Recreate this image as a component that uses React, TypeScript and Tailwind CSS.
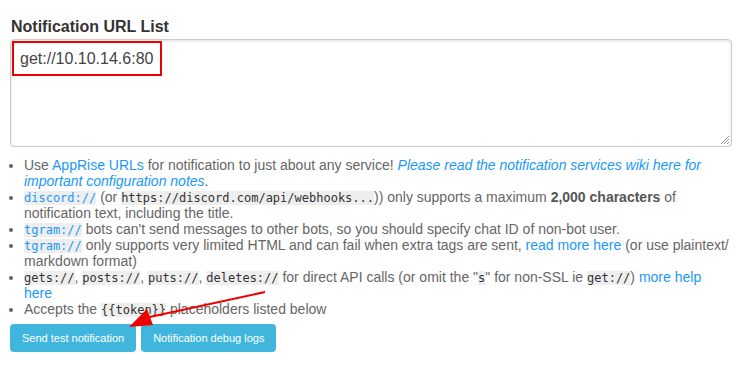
import React from "react";

const code = "bg-[#eeeeee] font-['DejaVu_Sans_Mono',monospace] text-[12px] leading-[14px]";
const link = "text-[#1b98f8]";

function Arrow() {
  // red annotation arrow pointing at the send button
  return (
    <svg
      className="absolute left-0 top-0 pointer-events-none"
      width="742"
      height="375"
      viewBox="0 0 742 375"
    >
      <line x1="265" y1="292" x2="145" y2="318" stroke="#ee0000" strokeWidth="2" />
      <polygon points="129,327 147,309 153,325" fill="#ee0000" />
    </svg>
  );
}

export default function App() {
  return (
    <div className="relative w-[742px] h-[375px] bg-white font-['Liberation_Sans',Arial,sans-serif] text-[#666666]">
      <div className="pt-[17px] pl-[10px] pr-[9px]">
        <div className="text-[16px] font-bold text-[#333333] leading-[20px] pl-[1px]">
          Notification URL List
        </div>
        <div className="relative mt-[2px] mr-[1px] h-[108px] border border-[#cccccc] rounded-[4px] shadow-[inset_0_1px_3px_#dddddd] bg-white">
          <div className="absolute left-[1px] top-[1px] w-[150px] h-[35px] border-2 border-[#ee0000]" />
          <div className="pl-[9px] pt-[9px] text-[16px] leading-[20px] text-[#444444]">
            get://10.10.14.6:80
          </div>
          <svg className="absolute right-[1px] bottom-[1px]" width="10" height="10" viewBox="0 0 10 10">
            <path d="M9 1 L1 9 M9 4 L4 9 M9 7 L7 9" stroke="#999999" strokeWidth="1" />
          </svg>
        </div>
        <ul className="mt-[10px] pl-[14px] list-disc marker:text-[#666666] text-[14px] leading-[16px]">
          <li>
            Use <span className={link}>AppRise URLs</span> for notification to just about any service!{" "}
            <span className={`${link} italic`}>
              Please read the notification services wiki here for important configuration notes
            </span>
            .
          </li>
          <li>
            <span className={`${code} text-[#1b98f8]`}>discord://</span> (or{" "}
            <span className={`${code} text-[#333333]`}>https://discord.com/api/webhooks...</span>)) only supports a
            maximum <b className="text-[#555555]">2,000 characters</b> of notification text, including the title.
          </li>
          <li>
            <span className={`${code} text-[#1b98f8]`}>tgram://</span> bots can't send messages to other bots, so you
            should specify chat ID of non-bot user.
          </li>
          <li>
            <span className={`${code} text-[#1b98f8]`}>tgram://</span> only supports very limited HTML and can fail
            when extra tags are sent, <span className={link}>read more here</span> (or use plaintext/ markdown format)
          </li>
          <li>
            <span className={`${code} text-[#333333]`}>gets://</span>,{" "}
            <span className={`${code} text-[#333333]`}>posts://</span>,{" "}
            <span className={`${code} text-[#333333]`}>puts://</span>,{" "}
            <span className={`${code} text-[#333333]`}>deletes://</span> for direct API calls (or omit the "
            <span className={`${code} text-[#333333]`}>s</span>" for non-SSL ie{" "}
            <span className={`${code} text-[#333333]`}>get://</span>) <span className={link}>more help here</span>
          </li>
          <li>
            Accepts the <span className={`${code} text-[#333333]`}>{"{{token}}"}</span> placeholders listed below
          </li>
        </ul>
        <div className="flex gap-[5px] mt-[7px]">
          <button className="h-[28px] px-[12px] rounded-[4px] bg-[#41b6dc] text-white text-[11px]">
            Send test notification
          </button>
          <button className="h-[28px] px-[12px] rounded-[4px] bg-[#41b6dc] text-white text-[11px]">
            Notification debug logs
          </button>
        </div>
      </div>
      <Arrow />
    </div>
  );
}
